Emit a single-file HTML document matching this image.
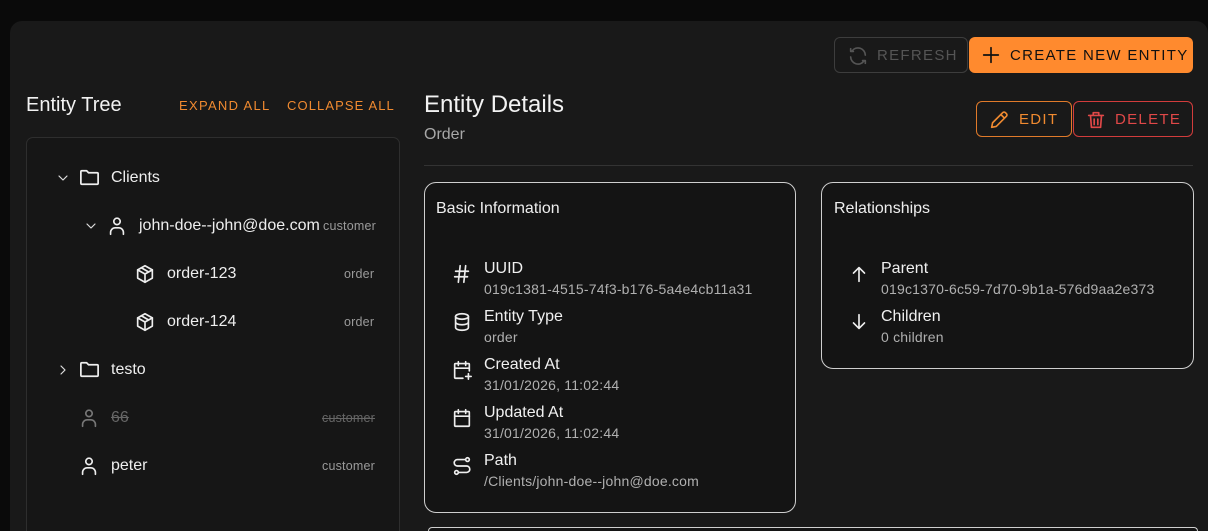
<!DOCTYPE html>
<html style="width:1208px;height:531px;overflow:hidden"><head><meta charset="utf-8"><style>
*{box-sizing:border-box;margin:0;padding:0}
body{width:1208px;height:531px;background:#0a0a0a;font-family:"Liberation Sans",sans-serif;color:#eee;overflow:hidden;position:relative}
.panel{position:absolute;left:10px;top:21px;width:1198px;height:510px;background:#191919;border-radius:12px 12px 0 0}
.a{position:absolute;white-space:nowrap}
svg{position:absolute;fill:none;stroke:currentColor;stroke-width:1.8;stroke-linecap:round;stroke-linejoin:round}
.btn{position:absolute;border-radius:6px;font-size:15px;letter-spacing:1.3px;display:flex;align-items:center;white-space:nowrap}
.card{position:absolute;border:1.5px solid #cfcfcf;border-radius:12px;background:#141414}
.lbl{font-size:16px;color:#f0f0f0}
.val{font-size:14px;color:#b0b0b0;letter-spacing:.2px}
.tree{font-size:16px;color:#eee}
.tag{font-size:12.5px;color:#9a9a9a;letter-spacing:.2px}
</style></head><body>
<div class="panel"></div>

<div class="btn" style="left:834px;top:37px;width:134px;height:36px;border:1px solid #3d3d3d;color:#555">
<svg style="left:12px;top:7px" width="22" height="22" viewBox="0 0 24 24"><path d="M20 11a8 8 0 0 0-14.5-4.5M4 4v3h3M4 13a8 8 0 0 0 14.5 4.5M20 20v-3h-3"/></svg>
<span style="margin-left:42px">REFRESH</span></div>
<div class="btn" style="left:969px;top:37px;width:224px;height:36px;background:#ff8a2e;color:#111">
<svg style="left:11px;top:7px" width="22" height="22" viewBox="0 0 24 24"><path d="M12 4v16M4 12h16"/></svg>
<span style="margin-left:41px">CREATE NEW ENTITY</span></div>

<div class="a" style="left:26px;top:94px;font-size:20px;color:#f2f2f2">Entity Tree</div>
<div class="a" style="left:179px;top:98px;font-size:13px;letter-spacing:1.3px;color:#f08a30">EXPAND ALL</div>
<div class="a" style="left:287px;top:98px;font-size:13px;letter-spacing:1.1px;color:#f08a30">COLLAPSE ALL</div>

<div style="position:absolute;left:26px;top:137px;width:374px;height:394px;border:1px solid #2e2e2e;border-bottom:none;border-radius:7px 7px 0 0;background:#161616"></div>

<svg style="left:55px;top:170px;color:#ddd" width="16" height="16" viewBox="0 0 24 24"><path d="M6 9l6 6 6-6"/></svg>
<svg style="left:78px;top:166px;color:#eee" width="23" height="23" viewBox="0 0 24 24"><path d="M3 6a1 1 0 0 1 1-1h5l2 2h9a1 1 0 0 1 1 1v10a1 1 0 0 1-1 1H4a1 1 0 0 1-1-1z"/></svg>
<div class="a tree" style="left:111px;top:169px">Clients</div>

<svg style="left:83px;top:218px;color:#ddd" width="16" height="16" viewBox="0 0 24 24"><path d="M6 9l6 6 6-6"/></svg>
<svg style="left:106px;top:215px;color:#eee" width="22" height="22" viewBox="0 0 24 24"><circle cx="12" cy="7" r="3.5"/><path d="M5 21v-2a5 5 0 0 1 5-5h4a5 5 0 0 1 5 5v2"/></svg>
<div class="a tree" style="left:139px;top:217px">john-doe--john@doe.com</div>
<div class="a tag" style="left:323px;top:219px">customer</div>

<svg style="left:134px;top:263px;color:#eee" width="22" height="22" viewBox="0 0 24 24"><path d="M12 3l8 4.5v9L12 21l-8-4.5v-9z"/><path d="M4 7.5l8 4.5 8-4.5M12 12v9M8 5.2l8 4.6"/></svg>
<div class="a tree" style="left:167px;top:265px">order-123</div>
<div class="a tag" style="left:344px;top:267px">order</div>
<svg style="left:134px;top:311px;color:#eee" width="22" height="22" viewBox="0 0 24 24"><path d="M12 3l8 4.5v9L12 21l-8-4.5v-9z"/><path d="M4 7.5l8 4.5 8-4.5M12 12v9M8 5.2l8 4.6"/></svg>
<div class="a tree" style="left:167px;top:313px">order-124</div>
<div class="a tag" style="left:344px;top:315px">order</div>

<svg style="left:55px;top:362px;color:#ddd" width="16" height="16" viewBox="0 0 24 24"><path d="M9 6l6 6-6 6"/></svg>
<svg style="left:78px;top:358px;color:#eee" width="23" height="23" viewBox="0 0 24 24"><path d="M3 6a1 1 0 0 1 1-1h5l2 2h9a1 1 0 0 1 1 1v10a1 1 0 0 1-1 1H4a1 1 0 0 1-1-1z"/></svg>
<div class="a tree" style="left:111px;top:361px">testo</div>

<svg style="left:78px;top:407px;color:#777" width="22" height="22" viewBox="0 0 24 24"><circle cx="12" cy="7" r="3.5"/><path d="M5 21v-2a5 5 0 0 1 5-5h4a5 5 0 0 1 5 5v2"/></svg>
<div class="a tree" style="left:111px;top:409px;color:#666;text-decoration:line-through">66</div>
<div class="a tag" style="left:322px;top:411px;color:#666;text-decoration:line-through">customer</div>

<svg style="left:78px;top:455px;color:#eee" width="22" height="22" viewBox="0 0 24 24"><circle cx="12" cy="7" r="3.5"/><path d="M5 21v-2a5 5 0 0 1 5-5h4a5 5 0 0 1 5 5v2"/></svg>
<div class="a tree" style="left:111px;top:457px">peter</div>
<div class="a tag" style="left:322px;top:459px">customer</div>

<div class="a" style="left:424px;top:91px;font-size:24px;color:#f2f2f2">Entity Details</div>
<div class="a" style="left:424px;top:126px;font-size:16px;color:#a8a8a8">Order</div>

<div class="btn" style="left:976px;top:101px;width:96px;height:36px;border:1px solid #e07a2a;color:#f08a30">
<svg style="left:11px;top:7px" width="22" height="22" viewBox="0 0 24 24"><path d="M4 20l1-5L16 4a2 2 0 0 1 3 0l1 1a2 2 0 0 1 0 3L9 19z M14 6l4 4"/></svg>
<span style="margin-left:42px">EDIT</span></div>
<div class="btn" style="left:1073px;top:101px;width:120px;height:36px;border:1px solid #d23c3c;color:#e04848">
<svg style="left:11px;top:7px" width="22" height="22" viewBox="0 0 24 24"><path d="M4 7h16M9 7V4h6v3M6 7l1 13h10l1-13M10 11v6M14 11v6"/></svg>
<span style="margin-left:41px">DELETE</span></div>

<div style="position:absolute;left:424px;top:165px;width:769px;height:1px;background:#333"></div>

<div class="card" style="left:424px;top:182px;width:372px;height:331px"></div>
<div class="a" style="left:436px;top:200px;font-size:16px;color:#eee">Basic Information</div>

<svg style="left:451px;top:263px;color:#eee" width="22" height="22" viewBox="0 0 24 24"><path d="M5 9h14M4 15h14M10 3L8 21M16 3l-2 18"/></svg>
<div class="a lbl" style="left:484px;top:260px">UUID</div>
<div class="a val" style="left:484px;top:281px">019c1381-4515-74f3-b176-5a4e4cb11a31</div>

<svg style="left:451px;top:311px;color:#eee" width="22" height="22" viewBox="0 0 24 24"><ellipse cx="12" cy="6" rx="7" ry="3"/><path d="M5 6v12c0 1.7 3 3 7 3s7-1.3 7-3V6M5 12c0 1.7 3 3 7 3s7-1.3 7-3"/></svg>
<div class="a lbl" style="left:484px;top:308px">Entity Type</div>
<div class="a val" style="left:484px;top:329px">order</div>

<svg style="left:451px;top:359px;color:#eee" width="22" height="22" viewBox="0 0 24 24"><path d="M13 21H5a1 1 0 0 1-1-1V6a1 1 0 0 1 1-1h14a1 1 0 0 1 1 1v7M4 10h16M8 3v4M16 3v4M19 16v6M16 19h6"/></svg>
<div class="a lbl" style="left:484px;top:356px">Created At</div>
<div class="a val" style="left:484px;top:377px">31/01/2026, 11:02:44</div>

<svg style="left:451px;top:407px;color:#eee" width="22" height="22" viewBox="0 0 24 24"><rect x="4" y="5" width="16" height="16" rx="1"/><path d="M4 10h16M8 3v4M16 3v4"/></svg>
<div class="a lbl" style="left:484px;top:404px">Updated At</div>
<div class="a val" style="left:484px;top:425px">31/01/2026, 11:02:44</div>

<svg style="left:451px;top:455px;color:#eee" width="22" height="22" viewBox="0 0 24 24"><circle cx="6" cy="19" r="2"/><circle cx="18" cy="5" r="2"/><path d="M8 19h9a3.5 3.5 0 0 0 0-7H7a3.5 3.5 0 0 1 0-7h9"/></svg>
<div class="a lbl" style="left:484px;top:452px">Path</div>
<div class="a val" style="left:484px;top:473px">/Clients/john-doe--john@doe.com</div>

<div class="card" style="left:821px;top:182px;width:373px;height:187px"></div>
<div class="a" style="left:834px;top:200px;font-size:16px;color:#eee">Relationships</div>
<svg style="left:848px;top:263px;color:#eee" width="22" height="22" viewBox="0 0 24 24"><path d="M12 20V5M6 11l6-6 6 6"/></svg>
<div class="a lbl" style="left:881px;top:260px">Parent</div>
<div class="a val" style="left:881px;top:281px">019c1370-6c59-7d70-9b1a-576d9aa2e373</div>
<svg style="left:848px;top:311px;color:#eee" width="22" height="22" viewBox="0 0 24 24"><path d="M12 4v15M6 13l6 6 6-6"/></svg>
<div class="a lbl" style="left:881px;top:308px">Children</div>
<div class="a val" style="left:881px;top:329px">0 children</div>

<div style="position:absolute;left:428px;top:527px;width:770px;height:4px;border:1.5px solid #cfcfcf;border-bottom:none;border-radius:12px 12px 0 0;background:#141414"></div>
</body></html>
